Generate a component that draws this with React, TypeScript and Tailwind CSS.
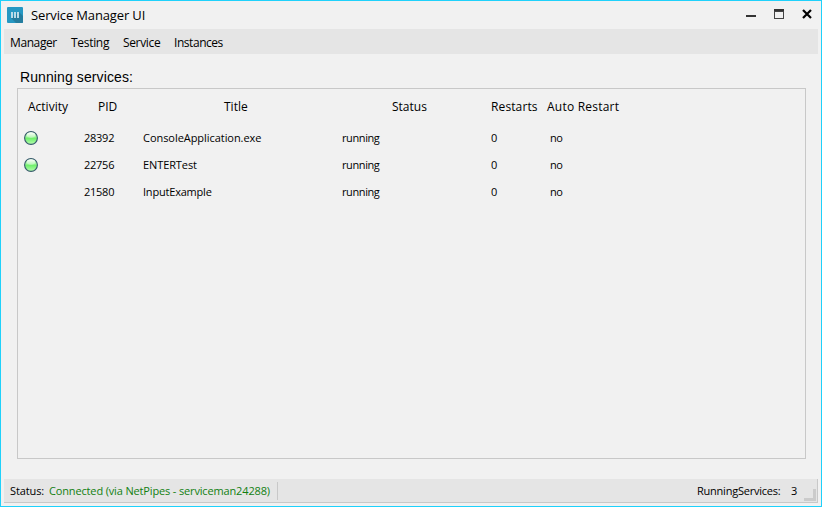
const ui = "font-['Open_Sans','Noto_Sans',sans-serif]";

const services = [
  { active: true, pid: '28392', title: 'ConsoleApplication.exe', tracking: 'tracking-[-0.05px]' },
  { active: true, pid: '22756', title: 'ENTERTest', tracking: 'tracking-[-0.1px]' },
  { active: false, pid: '21580', title: 'InputExample', tracking: 'tracking-[-0.2px]' },
];

function AppIcon() {
  return (
    <svg width="16" height="16" viewBox="0 0 16 16">
      <rect width="16" height="16" rx="1" fill="#2698c3" />
      <path d="M4 11 12 5 16 9V15Q16 16 15 16H9Z" fill="#247d9f" />
      <path d="M4 5h2v6H4zM7 5h2v6H7zM10 5h2v6h-2z" fill="#b9dbe8" />
    </svg>
  );
}

function ActivityLight() {
  return (
    <svg className="relative -top-px" width="15" height="15" viewBox="0 0 15 15">
      <defs>
        <linearGradient id="light" x1="0" y1="0" x2="0" y2="1">
          <stop offset="0" stopColor="#c0f3c4" />
          <stop offset="0.43" stopColor="#a0f49d" />
          <stop offset="0.5" stopColor="#6df068" />
          <stop offset="0.75" stopColor="#90f68b" />
          <stop offset="1" stopColor="#bcffb5" />
        </linearGradient>
        <linearGradient id="shine" x1="0" y1="0" x2="0" y2="1">
          <stop offset="0" stopColor="#fff" />
          <stop offset="1" stopColor="#b4f6b2" />
        </linearGradient>
      </defs>
      <circle cx="7" cy="8" r="6.4" fill="url(#light)" stroke="#35586a" strokeWidth="1.1" />
      <ellipse cx="7" cy="5" rx="4.2" ry="2.8" fill="url(#shine)" />
    </svg>
  );
}

export default function App() {
  return (
    <div className={`${ui} flex h-[507px] w-[822px] flex-col overflow-hidden border border-[#1fd1fb] bg-[#f1f1f1] px-[3px] text-black whitespace-nowrap`}>
      <header className="flex h-7 shrink-0 items-center pl-[3px]">
        <AppIcon />
        <h1 className="ml-2 text-[13px] leading-5 tracking-[-0.14px]">Service Manager UI</h1>
        <svg className="mr-0.5 ml-auto" width="74" height="28" viewBox="0 0 74 28" shapeRendering="crispEdges">
          <path d="M4 14h10v2H4z" fill="#333" />
          <path d="M32 8h10v3H32z" fill="#333" />
          <path d="M32.5 10.5h9v7h-9z" fill="none" stroke="#444" />
          <path d="m61 9 8 8m0-8-8 8" stroke="#000" strokeWidth="2.2" shapeRendering="auto" />
        </svg>
      </header>
      <nav className="grid h-[25px] shrink-0 grid-cols-[61px_52px_51px_60px] items-center bg-[#e5e5e5] pt-0.5 pl-1.5 text-[12px]">
        <span className="tracking-[-0.4px]">Manager</span>
        <span className="tracking-[-0.3px]">Testing</span>
        <span className="tracking-[-0.35px]">Service</span>
        <span className="tracking-[-0.45px]">Instances</span>
      </nav>
      <main className="flex min-h-0 flex-1 flex-col pl-[13px] pr-3">
        <h2 className="mt-3 ml-[3px] h-[22px] font-['Liberation_Sans',Arial,sans-serif] text-[14px] leading-[22px] tracking-[0.1px]">Running services:</h2>
        <section className="h-[371px] border border-[#c8c8c8]">
          <div className="grid h-9 grid-cols-[70px_126px_168px_99px_56px_90px] items-center pl-2.5 text-[12px]">
            <span>Activity</span>
            <span>PID</span>
            <span>Title</span>
            <span>Status</span>
            <span className="tracking-[0.12px]">Restarts</span>
            <span className="tracking-[0.22px]">Auto Restart</span>
          </div>
          {services.map((s) => (
            <div key={s.pid} className="grid h-[27px] grid-cols-[60px_59px_199px_149px_59px_60px] items-center pl-1.5 text-[11px]">
              <span>{s.active && <ActivityLight />}</span>
              <span className="tracking-[-0.25px]">{s.pid}</span>
              <span className={s.tracking}>{s.title}</span>
              <span className="tracking-[-0.4px]">running</span>
              <span>0</span>
              <span className="tracking-[-0.4px]">no</span>
            </div>
          ))}
        </section>
      </main>
      <footer className="relative mb-[3px] flex h-6 shrink-0 items-center border-r border-b border-[#c8c8c8] bg-[#e5e5e5] pt-px pl-1.5 text-[11px]">
        <span className="w-[39px] tracking-[-0.1px]">Status:</span>
        <span className="w-[228px] tracking-[-0.15px] text-[#118011]">Connected (via NetPipes - serviceman24288)</span>
        <span className="h-[18px] w-px bg-[#c8c8c8]" />
        <span className="ml-auto w-[94px] tracking-[-0.23px]">RunningServices:</span>
        <span className="mr-5 w-1.5">3</span>
        <svg className="absolute right-px bottom-px" width="12" height="12" viewBox="0 0 12 12">
          <path d="M9 0h3v12H0V9h9z" fill="#cbcbcb" />
        </svg>
      </footer>
    </div>
  );
}
